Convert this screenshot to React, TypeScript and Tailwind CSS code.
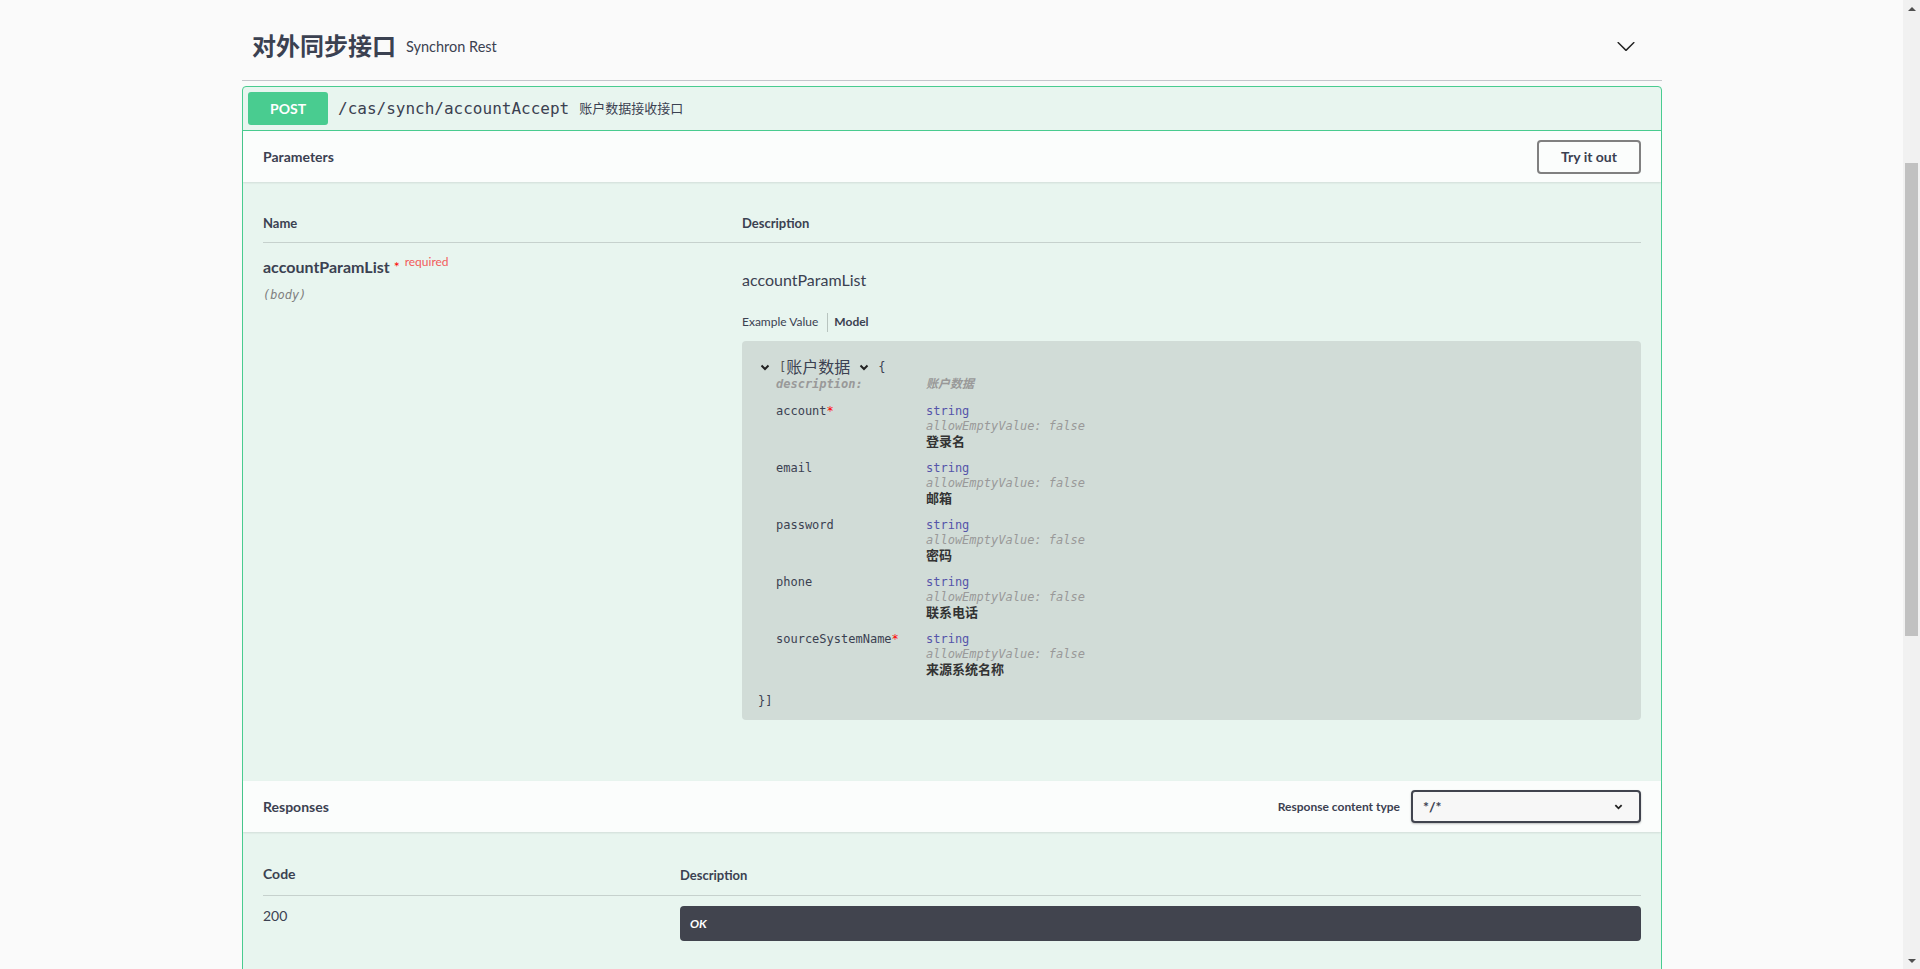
import React from "react";

const SANS = "font-['Lato','Noto_Sans_CJK_SC',sans-serif]";
const MONO = "font-['DejaVu_Sans_Mono','Noto_Sans_CJK_SC',monospace]";

const props = [
  { name: "account", required: true, desc: "登录名" },
  { name: "email", required: false, desc: "邮箱" },
  { name: "password", required: false, desc: "密码" },
  { name: "phone", required: false, desc: "联系电话" },
  { name: "sourceSystemName", required: true, desc: "来源系统名称" },
];

function SmallChevron({ className = "" }: { className?: string }) {
  return (
    <svg viewBox="0 0 10 10" className={className}>
      <path d="M1.5 3.5 L5 7 L8.5 3.5" fill="none" stroke="#222" strokeWidth="2" />
    </svg>
  );
}

function Scrollbar() {
  return (
    <div className="w-[17px] h-full bg-[#f1f1f1] flex flex-col">
      <div className="h-[17px] flex items-center justify-center">
        <div className="w-0 h-0 border-l-[4px] border-r-[4px] border-b-[4px] border-l-transparent border-r-transparent border-b-[#505050]" />
      </div>
      <div className="flex-1">
        <div className="mt-[146px] h-[473px] mx-[2px] bg-[#c1c1c1]" />
      </div>
      <div className="h-[17px] flex items-center justify-center">
        <div className="w-0 h-0 border-l-[4px] border-r-[4px] border-t-[4px] border-l-transparent border-r-transparent border-t-[#505050]" />
      </div>
    </div>
  );
}

export default function App() {
  return (
    <div className={`w-[1920px] h-[969px] overflow-hidden flex bg-[#fafafa] text-[#3b4151] ${SANS}`}>
      <div className="w-[1903px] h-full">
        <div className="w-[1420px] ml-[242px]">
          {/* tag header */}
          <div className="h-[81px] pt-[12px] flex items-center border-b border-[#c4c6cb]">
            <h4 className="ml-[10px] text-[24px] font-bold leading-[30px]">对外同步接口</h4>
            <span className="ml-[10px] text-[14.5px] leading-[20px] mt-[2px]">Synchron Rest</span>
            <div className="flex-1" />
            <svg viewBox="0 0 20 20" className="w-[20px] h-[20px] mr-[26px] mt-[-1px]">
              <path
                d="M17.418 6.109c.272-.268.709-.268.979 0s.271.701 0 .969l-7.908 7.83c-.27.268-.707.268-.979 0l-7.908-7.83c-.27-.268-.27-.701 0-.969.271-.268.709-.268.979 0L10 13.25l7.418-7.141z"
                fill="#222"
              />
            </svg>
          </div>

          {/* operation block */}
          <div className="mt-[5px] border border-[#49cc90] rounded-[4px] bg-[#e8f5ef]">
            <div className="p-[5px] flex items-center border-b border-[#49cc90]">
              <div className="w-[80px] h-[33px] rounded-[3px] bg-[#49cc90] text-white font-bold text-[14px] flex items-center justify-center">
                POST
              </div>
              <span className={`ml-[10px] text-[16px] ${MONO}`}>/cas/synch/accountAccept</span>
              <span className="ml-[10px] text-[13px]">账户数据接收接口</span>
            </div>

            {/* parameters header */}
            <div className="h-[51px] px-[20px] flex items-center justify-between bg-[#fbfdfc] shadow-[0_1px_2px_rgba(0,0,0,0.1)]">
              <span className="text-[14px] font-bold">Parameters</span>
              <button className="w-[104px] h-[34px] border-2 border-[#808080] rounded-[4px] font-bold text-[14px] bg-transparent">
                Try it out
              </button>
            </div>

            {/* parameters body */}
            <div className="px-[20px] pb-[61px]">
              <div className="pt-[32px] pb-[10px] flex border-b border-[#c6d1cd] text-[13px] font-bold leading-[18px]">
                <div className="w-[479px]">Name</div>
                <div>Description</div>
              </div>
              <div className="flex">
                <div className="w-[479px] pt-[14px]">
                  <div className="flex items-start leading-[20px]">
                    <span className="text-[16px] font-bold">accountParamList</span>
                    <span className="text-[14px] text-[#ff0000] ml-[4px]">*</span>
                    <span className="text-[12px] text-[#f25b5b] ml-[5px] leading-[14px] -mt-[2px]">required</span>
                  </div>
                  <div className={`mt-[10px] text-[12px] italic text-[#808080] leading-[16px] ${MONO}`}>(body)</div>
                </div>
                <div className="flex-1 pt-[27px]">
                  <div className="text-[16px] leading-[20px]">accountParamList</div>
                  <div className="mt-[22px] h-[20px] flex items-center text-[12px]">
                    <span className="pr-[9px]">Example Value</span>
                    <div className="w-px h-[19px] bg-[#b8c4bf]" />
                    <span className="pl-[6px] font-bold">Model</span>
                  </div>
                  <div className={`mt-[9px] rounded-[4px] bg-[#d1dcd7] pl-[18px] pt-[16px] pb-[11px] text-[12px] ${MONO}`}>
                    <div className="h-[20px] flex items-center">
                      <SmallChevron className="w-[10px] h-[10px]" />
                      <span className="ml-[9px] text-[#555]">[</span>
                      <span className={`text-[16px] ${SANS}`}>账户数据</span>
                      <SmallChevron className="ml-[9px] w-[10px] h-[10px]" />
                      <span className="ml-[9px]">{"{"}</span>
                    </div>
                    <div className="pl-[16px]">
                      <div className="flex leading-[15px] italic text-[#999] font-semibold">
                        <div className="w-[150px]">description:</div>
                        <div>账户数据</div>
                      </div>
                      {props.map((p) => (
                        <div key={p.name} className="flex mt-[12px] leading-[15px]">
                          <div className="w-[150px]">
                            {p.name}
                            {p.required && <span className="text-[#ff0000]">*</span>}
                          </div>
                          <div>
                            <div className="text-[#55a]">string</div>
                            <div className="italic text-[#999]">allowEmptyValue: false</div>
                            <div className={`text-[13px] font-bold text-[#333] ${SANS}`}>{p.desc}</div>
                          </div>
                        </div>
                      ))}
                    </div>
                    <div className="mt-[17px] leading-[15px] -ml-[2px]">{"}]"}</div>
                  </div>
                </div>
              </div>
            </div>

            {/* responses header */}
            <div className="h-[51px] px-[20px] flex items-center justify-between bg-[#fbfdfc] shadow-[0_1px_2px_rgba(0,0,0,0.1)]">
              <span className="text-[14px] font-bold">Responses</span>
              <div className="flex items-center">
                <span className="text-[12px] font-bold mr-[11px]">Response content type</span>
                <div className="w-[230px] h-[33px] border-2 border-[#41444e] rounded-[4px] bg-[#f7f7f7] flex items-center justify-between pl-[10px] pr-[16px] shadow-[0_1px_2px_rgba(0,0,0,0.25)]">
                  <span className="text-[14px] font-bold">*/*</span>
                  <SmallChevron className="w-[9px] h-[9px]" />
                </div>
              </div>
            </div>

            {/* responses body */}
            <div className="px-[20px] pb-[40px]">
              <div className="pt-[32px] pb-[11px] flex items-end border-b border-[#c6d1cd] font-bold">
                <div className="w-[417px] text-[14px] leading-[20px]">Code</div>
                <div className="text-[13px] leading-[18px]">Description</div>
              </div>
              <div className="flex pt-[10px]">
                <div className="w-[417px] text-[14px] leading-[20px]">200</div>
                <div className="flex-1 h-[35px] rounded-[4px] bg-[#41444e] flex items-center pl-[10px]">
                  <span className="text-[12px] italic font-bold text-white">OK</span>
                </div>
              </div>
            </div>
          </div>
        </div>
      </div>
      <Scrollbar />
    </div>
  );
}
